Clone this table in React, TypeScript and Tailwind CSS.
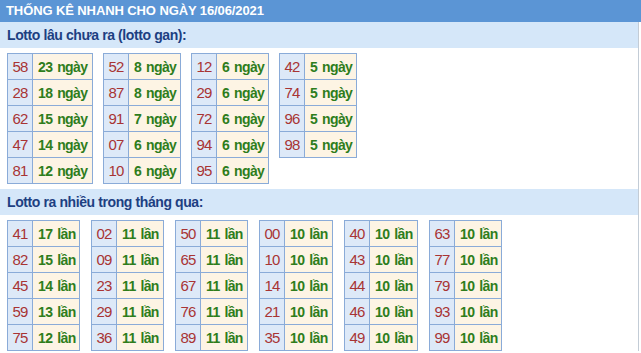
import React from 'react';

type Row = [string, string];

const gan: Row[][] = [
  [['58', '23 ngày'], ['28', '18 ngày'], ['62', '15 ngày'], ['47', '14 ngày'], ['81', '12 ngày']],
  [['52', '8 ngày'], ['87', '8 ngày'], ['91', '7 ngày'], ['07', '6 ngày'], ['10', '6 ngày']],
  [['12', '6 ngày'], ['29', '6 ngày'], ['72', '6 ngày'], ['94', '6 ngày'], ['95', '6 ngày']],
  [['42', '5 ngày'], ['74', '5 ngày'], ['96', '5 ngày'], ['98', '5 ngày']],
];

const nhieu: Row[][] = [
  [['41', '17 lần'], ['82', '15 lần'], ['45', '14 lần'], ['59', '13 lần'], ['75', '12 lần']],
  [['02', '11 lần'], ['09', '11 lần'], ['23', '11 lần'], ['29', '11 lần'], ['36', '11 lần']],
  [['50', '11 lần'], ['65', '11 lần'], ['67', '11 lần'], ['76', '11 lần'], ['89', '11 lần']],
  [['00', '10 lần'], ['10', '10 lần'], ['14', '10 lần'], ['21', '10 lần'], ['35', '10 lần']],
  [['40', '10 lần'], ['43', '10 lần'], ['44', '10 lần'], ['46', '10 lần'], ['49', '10 lần']],
  [['63', '10 lần'], ['77', '10 lần'], ['79', '10 lần'], ['93', '10 lần'], ['99', '10 lần']],
];

const LottoTable: React.FC<{ rows: Row[]; valueWidth: string }> = ({ rows, valueWidth }) => (
  <table className="table-fixed border-collapse border border-[#8aabd8]">
    <tbody>
      {rows.map(([num, val]) => (
        <tr key={num} className="h-[26px]">
          <td className="w-[25px] border border-[#8aabd8] bg-[#dde9f8] p-0 text-center text-[15px] leading-none tracking-[-0.8px] text-[#a83434]">
            {num}
          </td>
          <td className={`${valueWidth} border border-[#8aabd8] bg-[#fdf4e4] py-0 pl-[5px] pr-0 text-[14px] font-bold leading-none tracking-[-0.6px] [word-spacing:1.5px] text-[#2e7d1c] whitespace-nowrap`}>
            {val}
          </td>
        </tr>
      ))}
    </tbody>
  </table>
);

const SectionTitle: React.FC<{ children: React.ReactNode }> = ({ children }) => (
  <div className="flex h-[26px] items-center bg-[#d5e7f9] pl-[7px] text-[14px] font-bold tracking-[-0.4px] text-[#1d3f82]">
    {children}
  </div>
);

const ganWidths = ['w-[60px]', 'w-[52px]', 'w-[52px]', 'w-[52px]'];
const nhieuWidths = ['w-[47px]', 'w-[47px]', 'w-[47px]', 'w-[48px]', 'w-[48px]', 'w-[47px]'];

const App: React.FC = () => {
  return (
    <div className="h-[353px] w-[641px] overflow-hidden bg-white" style={{ fontFamily: '"Liberation Sans", Arial, sans-serif' }}>
      <div className="flex h-[22px] items-center bg-[#5b95d5] pl-[6px] text-[13px] font-bold tracking-[-0.1px] text-white">
        THỐNG KÊ NHANH CHO NGÀY 16/06/2021
      </div>
      <div className="w-[639px] border-r border-[#c3ccd6]">
        <SectionTitle>Lotto lâu chưa ra (lotto gan):</SectionTitle>
        <div className="flex items-start gap-[10px] pb-[5px] pl-[7px] pt-[5px]">
          {gan.map((rows, i) => (
            <LottoTable key={i} rows={rows} valueWidth={ganWidths[i]} />
          ))}
        </div>
        <SectionTitle>Lotto ra nhiều trong tháng qua:</SectionTitle>
        <div className="flex items-start gap-[11px] pl-[7px] pt-[5px]">
          {nhieu.map((rows, i) => (
            <LottoTable key={i} rows={rows} valueWidth={nhieuWidths[i]} />
          ))}
        </div>
      </div>
    </div>
  );
};

export default App;
